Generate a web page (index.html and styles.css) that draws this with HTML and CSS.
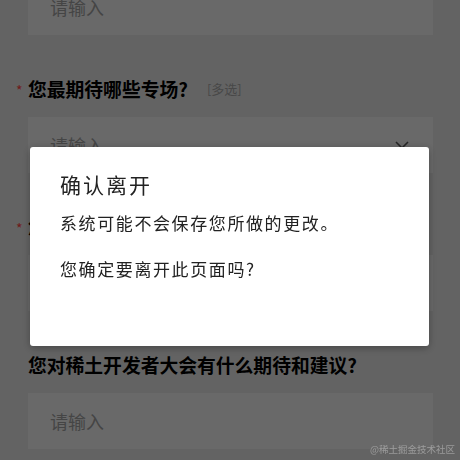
FILE: index.html
```html
<!DOCTYPE html>
<html lang="zh-CN">
<head>
    <meta charset="UTF-8">
    <meta name="viewport" content="width=device-width, initial-scale=1.0">
    <title>稀土开发者大会 问卷</title>
    <link rel="stylesheet" href="styles.css">
</head>
<body>
    <div class="form">
        <div class="field first">
            <div class="input"><span class="placeholder">请输入</span></div>
        </div>

        <div class="field">
            <div class="label"><span class="required">*</span>您最期待哪些专场?<span class="hint">[多选]</span></div>
            <div class="input select">
                <span class="placeholder">请输入</span>
                <svg class="chevron" width="14" height="8" viewBox="0 0 14 8">
                    <path d="M1 1l6 6 6-6" fill="none" stroke="#555" stroke-width="1.6"/>
                </svg>
            </div>
        </div>

        <div class="field">
            <div class="label"><span class="required">*</span>您目前的职业是?</div>
            <div class="input"><span class="placeholder">请输入</span></div>
        </div>

        <div class="field">
            <div class="label">您对稀土开发者大会有什么期待和建议?</div>
            <div class="input"><span class="placeholder">请输入</span></div>
        </div>
    </div>

    <div class="mask"></div>

    <div class="dialog">
        <div class="dialog-title">确认离开</div>
        <p class="dialog-text">系统可能不会保存您所做的更改。</p>
        <p class="dialog-text second">您确定要离开此页面吗?</p>
    </div>

    <div class="watermark">@稀土掘金技术社区</div>
</body>
</html>
```

FILE: styles.css
```css
body {
    margin: 0;
    background-color: #dcdcdc;
    font-family: "Noto Sans CJK SC", "Noto Sans", sans-serif;
    overflow: hidden;
}
.form {
    display: flex;
    flex-direction: column;
    gap: 41px;
    margin-top: -21px;
    padding: 0 27px 0 28px;
}
.field {
    display: flex;
    flex-direction: column;
    gap: 15px;
}
.label {
    font-size: 18.8px;
    font-weight: bold;
    line-height: 26px;
    height: 26px;
    color: #000;
    white-space: nowrap;
}
.required {
    display: inline-block;
    width: 12px;
    margin-left: -12px;
    color: #f53f3f;
    font-size: 14px;
    font-weight: normal;
    vertical-align: top;
    line-height: 28px;
}
.hint {
    margin-left: 19px;
    font-size: 13px;
    font-weight: normal;
    color: #a0a0a0;
    vertical-align: top;
}
.input {
    display: flex;
    align-items: center;
    justify-content: space-between;
    height: 56px;
    padding: 0 24px 0 22px;
    background-color: #e9e9e9;
}
.placeholder {
    font-size: 18px;
    color: #999;
}
.mask {
    position: fixed;
    inset: 0;
    background-color: rgba(0, 0, 0, 0.55);
}
.dialog {
    position: fixed;
    left: 30px;
    top: 147px;
    width: 399px;
    height: 199px;
    box-sizing: border-box;
    padding: 23px 30px 0;
    background-color: #fff;
    border-radius: 3px;
    box-shadow: 0 2px 8px rgba(0, 0, 0, 0.3);
    color: #222;
}
.dialog-title {
    font-size: 21px;
    line-height: 28px;
    letter-spacing: 2px;
}
.dialog-text {
    margin: 13px 0 0;
    font-size: 17px;
    line-height: 24px;
    letter-spacing: 1.6px;
}
.dialog-text.second {
    margin-top: 22px;
}
.watermark {
    position: fixed;
    right: 5px;
    bottom: 4px;
    font-size: 9.5px;
    color: rgba(255, 255, 255, 0.35);
}
```
